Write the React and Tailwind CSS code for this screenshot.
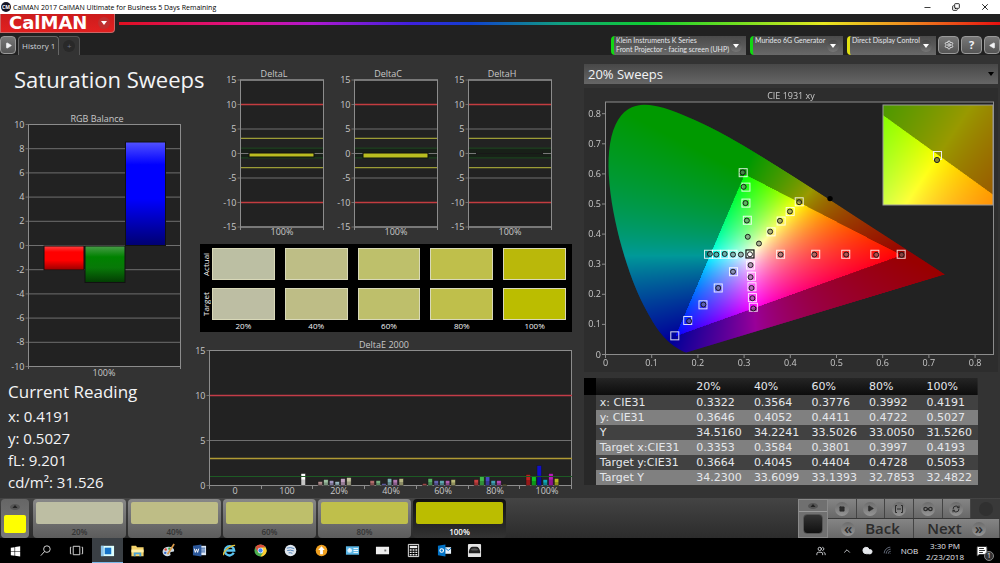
import { useEffect, useRef } from 'react';
import {
  ChevronUp, Cloud, Copy, Infinity as InfinityIcon, MessageSquareText, Minus,
  Play, RefreshCw, Settings, Square, Users, Wifi, X,
} from 'lucide-react';

const LOCUS = [
  [0.1741, 0.005], [0.1714, 0.0051], [0.1644, 0.0109], [0.1566, 0.0177], [0.144, 0.0297],
  [0.1241, 0.0578], [0.1096, 0.0868], [0.0913, 0.1327], [0.0687, 0.2007], [0.0454, 0.295],
  [0.0235, 0.4127], [0.0082, 0.5384], [0.0039, 0.6548], [0.0139, 0.7502], [0.0389, 0.812],
  [0.0743, 0.8338], [0.1142, 0.8262], [0.1547, 0.8059], [0.2296, 0.7543], [0.3016, 0.6923],
  [0.3731, 0.6245], [0.4441, 0.5547], [0.5125, 0.4866], [0.5752, 0.4242], [0.627, 0.3725],
  [0.6658, 0.334], [0.6915, 0.3083], [0.719, 0.2809], [0.7347, 0.2653],
];

const TARGETS = [
  [0.64, 0.333], [0.583, 0.333], [0.52, 0.333], [0.455, 0.333], [0.379, 0.333],
  [0.298, 0.604], [0.304, 0.556], [0.304, 0.503], [0.307, 0.446],
  [0.15, 0.062], [0.178, 0.113], [0.211, 0.165], [0.244, 0.221], [0.277, 0.275],
  [0.223, 0.333], [0.24, 0.333], [0.258, 0.333], [0.276, 0.333],
  [0.32, 0.157], [0.318, 0.189], [0.317, 0.225], [0.316, 0.26], [0.314, 0.297],
  [0.4193, 0.5073], [0.3997, 0.4748], [0.3801, 0.4434], [0.3584, 0.4075],
];

const READINGS = [
  [0.641, 0.331], [0.586, 0.331], [0.521, 0.332], [0.452, 0.332], [0.379, 0.332],
  [0.297, 0.605], [0.299, 0.557], [0.303, 0.503], [0.306, 0.445], [0.308, 0.391],
  [0.181, 0.111], [0.212, 0.166], [0.244, 0.221], [0.276, 0.275],
  [0.226, 0.334], [0.24, 0.332], [0.258, 0.334], [0.276, 0.332], [0.293, 0.332],
  [0.32, 0.153], [0.318, 0.187], [0.316, 0.221], [0.314, 0.257], [0.314, 0.297],
  [0.4191, 0.506], [0.3992, 0.4752], [0.3776, 0.4441], [0.3564, 0.4082], [0.3322, 0.3686],
];

const SWATCHES = [
  { label: '20%', actual: 'bg-[#bcbfa3]', target: 'bg-[#bdbea3]' },
  { label: '40%', actual: 'bg-[#bebe86]', target: 'bg-[#bebd86]' },
  { label: '60%', actual: 'bg-[#bec06b]', target: 'bg-[#bebf6b]' },
  { label: '80%', actual: 'bg-[#bfbf4b]', target: 'bg-[#bfbf4b]' },
  { label: '100%', actual: 'bg-[#bab80a]', target: 'bg-[#bbbd00]' },
];

const DELTA_E = [
  [333, 12, '#ffffff'],
  [384, 4, '#b48f8f'], [401, 6, '#9dbfa0'], [418, 5, '#a096c0'], [435, 4, '#9cbcc4'], [452, 7, '#c0a0c0'], [470, 8, '#c2c2a0'],
  [540, 5, '#b06c6c'], [558, 5, '#78b080'], [575, 2, '#6868b0'], [592, 7, '#80b0b4'], [609, 6, '#b078b0'], [627, 7, '#b4b482'],
  [697, 2, '#b05050'], [714, 7, '#5cb068'], [732, 5, '#6464b0'], [749, 5, '#60a8b0'], [766, 5, '#b060b0'], [783, 6, '#b8b878'],
  [852, 6, '#c84040'], [869, 9, '#40b848'], [886, 9, '#4848c0'], [903, 5, '#40a0b4'], [920, 5, '#b448b4'], [937, 1, '#a0a040'],
  [1008, 11, '#c02020'], [1025, 9, '#10c020'], [1041, 20, '#1010c8'], [1059, 6, '#10a8b8'], [1076, 12, '#b818b8'], [1093, 7, '#b8b820'],
];

const ROWS = [
  ['x: CIE31', '0.3322', '0.3564', '0.3776', '0.3992', '0.4191'],
  ['y: CIE31', '0.3646', '0.4052', '0.4411', '0.4722', '0.5027'],
  ['Y', '34.5160', '34.2241', '33.5026', '33.0050', '31.5260'],
  ['Target x:CIE31', '0.3353', '0.3584', '0.3801', '0.3997', '0.4193'],
  ['Target y:CIE31', '0.3664', '0.4045', '0.4404', '0.4728', '0.5053'],
  ['Target Y', '34.2300', '33.6099', '33.1393', '32.7853', '32.4822'],
];

// xy chromaticity -> display colour, dimmed outside the Rec.709 triangle
function xyToRgb(x, y) {
  const yy = Math.max(y, 0.0001);
  const X = x / yy;
  const Z = (1 - x - yy) / yy;
  const lin = [
    3.2406 * X - 1.5372 - 0.4986 * Z,
    -0.9689 * X + 1.8758 + 0.0415 * Z,
    0.0557 * X - 0.204 + 1.057 * Z,
  ];
  const inside = Math.min(...lin) >= 0;
  const max = Math.max(...lin);
  return lin.map((c) => Math.round(255 * (inside ? 1 : 0.6) * Math.pow(Math.max(c, 0) / max, 0.85)));
}

function Chromaticity({ x0, x1, y0, y1, width, height, clip }) {
  const ref = useRef(null);

  useEffect(() => {
    const ctx = ref.current.getContext('2d');
    const img = ctx.createImageData(width, height);
    for (let j = 0; j < height; j++) {
      for (let i = 0; i < width; i++) {
        const rgb = xyToRgb(x0 + ((x1 - x0) * i) / width, y1 - ((y1 - y0) * j) / height);
        img.data.set([...rgb, 255], (j * width + i) * 4);
      }
    }
    ctx.putImageData(img, 0, 0);
    if (!clip) return;

    const pts = LOCUS.map(([x, y]) => [((x - x0) / (x1 - x0)) * width, ((y1 - y) / (y1 - y0)) * height]);
    ctx.globalCompositeOperation = 'destination-in';
    ctx.beginPath();
    ctx.moveTo(...pts[0]);
    for (let k = 1; k < pts.length - 1; k++) {
      const [ax, ay] = pts[k];
      const [bx, by] = pts[k + 1];
      ctx.quadraticCurveTo(ax, ay, (ax + bx) / 2, (ay + by) / 2);
    }
    ctx.lineTo(...pts[pts.length - 1]);
    ctx.closePath();
    ctx.fill();
    ctx.globalCompositeOperation = 'source-over';
  }, [x0, x1, y0, y1, width, height, clip]);

  return <canvas ref={ref} width={width} height={height} className="block w-full h-full" />;
}

function Frame({ x, y, w, h, ticks, title, titleX }) {
  return (
    <>
      <rect x={x} y={y} width={w} height={h} fill="#222" stroke="#8c8c8c" />
      {ticks.map(([label, ty]) => (
        <g key={label}>
          <line x1={x - 3} x2={x + w} y1={ty} y2={ty} stroke="#6f6f6f" />
          <text x={x - 4} y={ty + 3} textAnchor="end" fill="#c8c8c8" fontSize="9">{label}</text>
        </g>
      ))}
      <rect x={x} y={y} width={w} height={h} fill="none" stroke="#8c8c8c" />
      <text x={titleX} y={y - 3} textAnchor="middle" fill="#c8c8c8" fontSize="9">{title}</text>
    </>
  );
}

function RgbBalance() {
  const ticks = [10, 8, 6, 4, 2, 0, -2, -4, -6, -8, -10].map((v) => [String(v), 134.5 - v * 12.1]);
  return (
    <svg viewBox="0 0 190 268" className="block w-full mt-4">
      <defs>
        <linearGradient id="barR" x2="0" y2="1">
          <stop offset="0" stopColor="#f44" /><stop offset=".25" stopColor="#f00" />
          <stop offset=".6" stopColor="#f00" /><stop offset="1" stopColor="#900" />
        </linearGradient>
        <linearGradient id="barG" x2="0" y2="1">
          <stop offset="0" stopColor="#4a9c4a" /><stop offset=".3" stopColor="#008200" />
          <stop offset=".6" stopColor="#087808" /><stop offset="1" stopColor="#033c03" />
        </linearGradient>
        <linearGradient id="barB" x2="0" y2="1">
          <stop offset="0" stopColor="#5252ff" /><stop offset=".22" stopColor="#00f" />
          <stop offset=".55" stopColor="#00f" /><stop offset="1" stopColor="#000070" />
        </linearGradient>
      </defs>
      <Frame x={28.5} y={13.5} w={152} h={242} ticks={ticks} title="RGB Balance" titleX={97} />
      <g stroke="#111">
        <rect x="44" y="135" width="40" height="24" fill="url(#barR)" />
        <rect x="85" y="135" width="40" height="36.5" fill="url(#barG)" />
        <rect x="125.5" y="31" width="40" height="103.5" fill="url(#barB)" />
      </g>
      <path d="M28.5 255v3M180.5 255v3" stroke="#8c8c8c" />
      <text x="104" y="265" textAnchor="middle" fill="#c8c8c8" fontSize="9">100%</text>
    </svg>
  );
}

function DeltaChart({ title, value }) {
  const py = (v) => 86.5 - v * 4.9;
  const ticks = [15, 10, 5, 0, -5, -10, -15].map((v) => [String(v), py(v)]);
  return (
    <svg viewBox="0 0 114 171" className="block w-full">
      <Frame x={22.5} y={13} w={83} h={147} ticks={ticks} title={title} titleX={56} />
      <rect x="23" y={py(1)} width="82" height="9.8" fill="#182018" />
      <path d={`M23 ${py(0)}h82`} stroke="#777" />
      <path d={`M23 ${py(10)}h82M23 ${py(-10)}h82`} stroke="#c43c40" strokeWidth="1.3" />
      <path d={`M23 ${py(3.1)}h82M23 ${py(-2.9)}h82`} stroke="#bcbc3c" />
      <path d={`M23 ${py(1.1)}h82M23 ${py(-0.9)}h82`} stroke="#1d4a20" />
      {value ? (
        <rect x="31" y="86" width="65" height={value} fill="#b9bd20" stroke="#111" />
      ) : (
        <path d="M30.5 84v4M96.5 84v4M31 86.5h65" stroke="#181818" />
      )}
      <path d="M22.5 159v4M105.5 159v4" stroke="#8c8c8c" />
      <text x="64" y="168" textAnchor="middle" fill="#c8c8c8" fontSize="9">100%</text>
    </svg>
  );
}

function DeltaEChart() {
  const ticks = [[15, 14.5], [10, 59.5], [5, 104.5], [0, 149.5]].map(([l, y]) => [String(l), y]);
  return (
    <svg viewBox="0 0 390 160" className="block w-full mt-1">
      <Frame x={19.5} y={14.5} w={362} h={135} ticks={ticks} title="DeltaE 2000" titleX={194} />
      {DELTA_E.map(([x, h, fill]) => (
        <g key={x}>
          <rect x={x / 3} y={149.5 - h} width="4.5" height={h} fill={fill} stroke="#181818" strokeWidth=".5" />
          <rect x={x / 3} y={149.5 - h / 2} width="4.5" height={h / 2} fill="#000" opacity=".22" />
        </g>
      ))}
      <path d="M20 59.5h362" stroke="#c43c48" strokeWidth="1.5" />
      <path d="M20 122.5h362" stroke="#b09a34" strokeWidth="1.5" />
      <path d="M20 140.5h362" stroke="#1d5a24" />
      <path d="M19.5 149v4M71.5 149v4M122.5 149v4M174.5 149v4M226.5 149v4M278.5 149v4M329.5 149v4M381.5 149v4" stroke="#8c8c8c" />
      {['0', '100', '20%', '40%', '60%', '80%', '100%'].map((t, i) => (
        <text key={t} x={45 + i * 52} y="158" textAnchor="middle" fill="#c8c8c8" fontSize="9">{t}</text>
      ))}
    </svg>
  );
}

function CieChart() {
  const px = (x) => 21.5 + x * 462;
  const py = (y) => 266.5 - y * 301;
  return (
    <svg viewBox="0 0 414 284" className="block w-full mt-1 bg-[#2d2d2d]">
      <rect x="21.5" y="14" width="388" height="252.5" fill="#222" />
      <foreignObject x="21.5" y="13.65" width="369.6" height="252.85">
        <Chromaticity x0={0} x1={0.8} y0={0} y1={0.84} width={740} height={506} clip />
      </foreignObject>
      <rect x="21.5" y="14" width="388" height="252.5" fill="none" stroke="#8c8c8c" />
      <text x="207" y="11" textAnchor="middle" fill="#c8c8c8" fontSize="9">CIE 1931 xy</text>
      {[0, 0.1, 0.2, 0.3, 0.4, 0.5, 0.6, 0.7, 0.8].map((v) => (
        <g key={v} fill="#c8c8c8" fontSize="9">
          <path d={`M18 ${py(v)}h3M${px(v)} 267v3`} stroke="#8c8c8c" />
          <text x="17" y={py(v) + 3} textAnchor="end">{v}</text>
          <text x={px(v)} y="278" textAnchor="middle">{v}</text>
        </g>
      ))}
      {TARGETS.map(([x, y]) => (
        <rect key={`${x} ${y}`} x={px(x) - 4} y={py(y) - 4} width="8" height="8" fill="none" stroke="#fff" strokeOpacity=".85" />
      ))}
      {READINGS.map(([x, y]) => (
        <circle key={`${x} ${y}`} cx={px(x)} cy={py(y)} r="2.5" fill="#777" fillOpacity=".55" stroke="#111" strokeWidth=".9" />
      ))}
      <rect x={px(0.3127) - 4} y={py(0.334) - 4} width="8" height="8" fill="none" stroke="#111" strokeWidth="1.2" />
      <circle cx={px(0.3127)} cy={py(0.333)} r="2.5" fill="#fff" stroke="#222" />
      <circle cx={px(0.486)} cy={py(0.518)} r="2.7" fill="#000" />
      <foreignObject x="299" y="17" width="110" height="100">
        <Chromaticity x0={0.369} x1={0.469} y0={0.4553} y1={0.5553} width={220} height={200} />
      </foreignObject>
      <rect x="299" y="17" width="110" height="100" fill="none" stroke="#999" />
      <rect x="349.5" y="63.5" width="8" height="8" fill="none" stroke="#eee" />
      <circle cx="353" cy="72" r="2.6" fill="#8a8a30" stroke="#222" />
    </svg>
  );
}

function Swatches() {
  return (
    <div className="mt-1.5 ml-2.5 mr-2 h-22 bg-black flex text-[8px] leading-3 text-gray-100">
      <div className="w-3 flex flex-col pt-1 gap-2">
        <span className="h-8 text-center rotate-180 [writing-mode:vertical-rl]">Actual</span>
        <span className="h-8 text-center rotate-180 [writing-mode:vertical-rl]">Target</span>
      </div>
      <div className="flex-1 grid grid-cols-5 gap-2.5 pt-1 pr-1.5">
        {SWATCHES.map((s) => (
          <div key={s.label} className="text-center">
            <div className={`h-8 border border-[#d8d8b8] ${s.actual}`} />
            <div className={`h-8 mt-2 border border-[#d8d8b8] ${s.target}`} />
            {s.label}
          </div>
        ))}
      </div>
    </div>
  );
}

function Knob({ children }) {
  return (
    <span className="w-3 h-3 shrink-0 rounded-full bg-gradient-to-b from-[#444] to-[#777] flex items-center justify-center text-white">
      {children}
    </span>
  );
}

function Caret() {
  return (
    <svg viewBox="0 0 6 4" className="w-1.5 h-1"><path d="M0 0h6L3 4z" fill="currentColor" /></svg>
  );
}

function Device({ name, sub, edge, width }) {
  return (
    <button className={`${width} h-[19px] pl-0.5 pr-1 border-l-3 ${edge} rounded-l-sm bg-gradient-to-b from-[#4a4a4a] to-[#696969] flex items-center text-left font-['Lato',sans-serif] text-[7px] leading-[9px] text-gray-200`}>
      <span className="flex-1 min-w-0 self-start whitespace-nowrap">{name}<br />{sub}</span>
      <Knob><Caret /></Knob>
    </button>
  );
}

function Header() {
  const round = 'h-[18px] rounded-sm border border-[#999] bg-gradient-to-b from-[#777] to-[#555] flex items-center justify-center text-gray-100';
  return (
    <header className="bg-[#212121]">
      <div className="h-3.5 bg-white flex items-center pl-px text-black">
        <span className="w-2.5 h-2.5 rounded-full bg-[#151525] text-[5px] leading-none font-bold text-white flex items-center justify-center">CM</span>
        <span className="pl-0.5 text-[7px] leading-none">CalMAN 2017 CalMAN Ultimate for Business 5 Days Remaining</span>
        <div className="ml-auto flex gap-5 pr-2.5">
          <button aria-label="Minimize"><Minus size={9} strokeWidth={2} /></button>
          <button aria-label="Restore"><Copy size={8} strokeWidth={2.5} className="-scale-x-100 rotate-180" /></button>
          <button aria-label="Close"><X size={10} strokeWidth={2} /></button>
        </div>
      </div>
      <div className="flex items-start">
        <button className="w-[115px] h-[19px] pl-2 pr-1 flex items-center justify-between border border-t-0 border-[#c66] rounded-br-sm bg-gradient-to-b from-[#cc1c1c] to-[#e22020] text-white">
          <span className="font-['DejaVu_Sans',sans-serif] font-bold text-[18px] leading-none">CalMAN</span>
          <span className="w-3 h-3 rounded-full bg-[#c03030] flex items-center justify-center"><Caret /></span>
        </button>
        <div className="flex-1 h-[3px] mt-2 ml-1 bg-[linear-gradient(90deg,#e01020_0%,#e0108c_14%,#b018d0_22%,#4020e0_33%,#1040d0_40%,#10a080_50%,#10d030_60%,#70e020_70%,#e8e820_80%,#f09020_89%,#e81010_100%)]" />
      </div>
      <div className="flex items-end h-[22px]">
        <button aria-label="Play" className={`w-4 mb-px mr-0.5 ${round}`}><Play size={7} fill="currentColor" /></button>
        <button className="h-[19px] px-[3px] border border-b-0 border-[#666] rounded-t-sm bg-[#333] text-[8px] text-gray-300">History 1</button>
        <button aria-label="Add" className="h-[19px] w-[21px] border border-b-0 border-l-0 border-[#555] rounded-tr-sm bg-[#333] text-[8px] text-gray-500 flex items-center justify-center">
          <span className="w-3 h-3 rounded-full bg-[#292929] flex items-center justify-center">+</span>
        </button>
        <div className="ml-auto flex gap-1">
          <Device name="Klein Instruments K Series" sub="Front Projector - facing screen (UHP)" edge="border-[#12d812]" width="w-[135px]" />
          <Device name="Murideo 6G Generator" edge="border-[#12d812]" width="w-[93px]" />
          <Device name="Direct Display Control" edge="border-[#e2e212]" width="w-[89px]" />
        </div>
        <div className="flex gap-0.5 pl-0.5 mb-px">
          <button aria-label="Settings" className={`w-[21px] ${round}`}><Settings size={10} /></button>
          <button aria-label="Help" className={`w-[21px] text-[11px] font-bold ${round}`}>?</button>
          <button aria-label="Collapse" className={`w-4 ${round}`}><Play size={7} fill="currentColor" className="rotate-180" /></button>
        </div>
      </div>
    </header>
  );
}

function DataTable() {
  return (
    <div className="mt-1.5 pr-5">
      <table className="w-full table-fixed border-collapse text-left font-['DejaVu_Sans',sans-serif] text-[11px] leading-[15px] text-gray-200">
        <thead>
          <tr className="h-[17px] bg-gradient-to-b from-[#252525] to-[#0c0c0c]">
            <th className="w-[3%] p-0 bg-black" />
            <th className="w-[24%] p-0" />
            {SWATCHES.map((s) => <th key={s.label} className="p-0 pl-1.5 font-normal">{s.label}</th>)}
          </tr>
        </thead>
        <tbody>
          {ROWS.map(([name, ...cells], i) => (
            <tr key={name} className={i % 2 ? 'bg-[#808080]' : 'bg-[#414141]'}>
              <td className="p-0 bg-[#282828]" />
              <th scope="row" className="p-0 pl-1 font-normal whitespace-nowrap">{name}</th>
              {cells.map((c) => <td key={c} className="p-0 pl-1.5">{c}</td>)}
            </tr>
          ))}
        </tbody>
      </table>
    </div>
  );
}

function Transport() {
  const btn = 'h-full border-r border-[#444] bg-gradient-to-b from-[#858585] to-[#686868] flex items-center justify-center';
  const disc = 'w-3.5 h-3.5 rounded-full bg-gradient-to-b from-[#6c6c6c] to-[#959595] flex items-center justify-center';
  return (
    <div className="ml-auto flex text-[#2b2b2b]">
      <div className="w-[30px] flex flex-col border border-[#8a8a8a] bg-[#707070]">
        <button aria-label="Expand" className="h-3 border-b border-[#9a9a9a] flex items-center justify-center"><Eject /></button>
        <button aria-label="Pattern" className="mt-0.5 mx-auto w-5 h-5 rounded-sm border border-[#555] bg-gradient-to-b from-[#333] to-[#111]" />
      </div>
      <div className="w-[172px] flex flex-col">
        <div className="h-[19px] grid grid-cols-6">
          <button aria-label="Stop" className={btn}><span className={disc}><Square size={6} fill="currentColor" /></span></button>
          <button aria-label="Read" className={btn}><span className={disc}><Play size={7} fill="currentColor" /></span></button>
          <button aria-label="Read series" className={btn}>
            <span className={disc}>
              <svg viewBox="0 0 8 8" className="w-2 h-2" fill="none" stroke="currentColor"><path d="M2 .5H.5v7H2M6 .5h1.5v7H6M2 4h4" /></svg>
            </span>
          </button>
          <button aria-label="Continuous" className={btn}><span className={disc}><InfinityIcon size={10} strokeWidth={3} /></span></button>
          <button aria-label="Refresh" className={btn}><span className={disc}><RefreshCw size={8} strokeWidth={3} /></span></button>
          <div className="flex items-center justify-center bg-[#393939]"><span className="w-3.5 h-3.5 rounded-full bg-[#303030]" /></div>
        </div>
        <div className="h-[19px] mt-px grid grid-cols-2 text-[15px] leading-none font-semibold">
          <button className={`gap-2.5 ${btn}`}><span className={disc}>«</span>Back</button>
          <button className={`gap-2.5 ${btn}`}>Next<span className={disc}>»</span></button>
        </div>
      </div>
    </div>
  );
}

function Eject() {
  return (
    <svg viewBox="0 0 10 6" className="w-2.5 h-1.5"><ellipse cx="5" cy="3" rx="5" ry="3" fill="#555" /><path d="M2.5 4L5 1l2.5 3z" fill="#222" /></svg>
  );
}

function PatternBar() {
  return (
    <section className="h-10 pt-px flex bg-gradient-to-b from-[#444] to-[#2c2c2c]">
      <div className="w-7 ml-px mr-1 flex flex-col items-center rounded-sm bg-gradient-to-b from-[#666] to-[#7a7a7a]">
        <button aria-label="Expand" className="h-4"><Eject /></button>
        <button aria-label="Yellow" className="w-[22px] h-[18px] rounded-xs bg-[#ff0]" />
      </div>
      <div className="w-[473px] grid grid-cols-5 gap-0.5">
        {SWATCHES.map((s, i) => (
          <button
            key={s.label}
            className={`px-[3px] pt-[3px] rounded-sm text-[8px] leading-3 font-semibold ${
              i === 4 ? 'bg-gradient-to-b from-[#111] to-[#333] text-white' : 'bg-gradient-to-b from-[#888] to-[#5c5c5c] text-[#333]'
            }`}
          >
            <span className={`block h-[22px] mb-0.5 rounded-xs ${s.target}`} />
            {s.label}
          </button>
        ))}
      </div>
      <Transport />
    </section>
  );
}

const APPS = [
  ['Start', <path key="a" fill="#fff" d="M3 5l4-.6v4.4H3zM7.6 4.3L13 3.5v5.3H7.6zM3 9.3h4v4.3L3 13zM7.6 9.3H13v5.2l-5.4-.8z" />],
  ['Search', <g key="a" fill="none" stroke="#ddd"><circle cx="9.5" cy="6.5" r="3.5" /><path d="M7 9l-4 4.5" /></g>],
  ['Task view', <path key="a" fill="none" stroke="#ddd" d="M4.5 3.5h7v9h-7zM2.5 4.5h-1v7h1M13.5 4.5h1v7h-1" />],
  ['CalMAN', <g key="a"><path fill="#dff" d="M1 3h14v11H1z" /><path fill="#1673c8" d="M5 5h7v7H5z" /><path fill="#8cc4ea" d="M1 3h3v11H1z" /></g>],
  ['Explorer', <g key="a"><path fill="#f3d26c" d="M1.5 3h5l1 1.5h7v9.5h-13z" /><path fill="#fff0a8" d="M1.5 7h13v3h-13z" /><path fill="#4aa3d8" d="M4 10h8v4h-2v-2H6v2H4z" /></g>],
  ['Paint', <g key="a"><path fill="#c9d8e4" d="M8 4C3 4 1 8 2 11s5 4 8 2c1-1-1-2 0-3s4 0 4-2-2-4-6-4z" /><circle cx="5" cy="7" r="1.3" fill="#d43" /><circle cx="9" cy="6" r="1.3" fill="#3a4" /><circle cx="4.5" cy="10.5" r="1.3" fill="#36c" /><path d="M14 1L7 12" stroke="#d99a4a" strokeWidth="1.8" /></g>],
  ['Word', <g key="a"><path fill="#dbe6f5" d="M8 3h7v10H8z" /><path stroke="#2b579a" d="M9 5.5h5M9 7.5h5M9 9.5h5" /><path fill="#2b579a" d="M1 3l9-1.5v13L1 13z" /><path d="M2.5 6l1 4 1.3-3.5L6 10l1.2-4" fill="none" stroke="#fff" /></g>],
  ['Internet Explorer', <g key="a" fill="none"><path d="M12.5 10.5A5 5 0 1 1 13 8H4" stroke="#5cc4f0" strokeWidth="2.5" /><path d="M2 13C0 10 9 2 14 2.5" stroke="#e8c030" strokeWidth="1.3" /></g>],
  ['Chrome', <g key="a"><circle cx="8" cy="8" r="6.5" fill="#4caf50" /><path fill="#e04a3a" d="M2.4 4.7a6.5 6.5 0 0 1 11.2 0L8 5z" /><path fill="#fc3" d="M13.6 4.7A6.5 6.5 0 0 1 8 14.5l3-5-3-4.8z" /><path fill="#e04a3a" d="M2.4 4.7L5 9.3 8 5z" /><circle cx="8" cy="8" r="3" fill="#fff" /><circle cx="8" cy="8" r="2.3" fill="#4285f4" /></g>],
  ['Messenger', <g key="a"><circle cx="8" cy="8" r="6.2" fill="#dfe6ee" /><path d="M4 5.5q4-1.5 8 .5M4.5 8q3.5-1 7 .5M6 10.5q2-.5 4 .5" fill="none" stroke="#4c7fb8" /></g>],
  ['Updater', <g key="a"><circle cx="8" cy="8" r="6.2" fill="#f0a020" /><path fill="#fff" d="M8 3.5l3.5 4h-2V12h-3V7.5h-2z" /></g>],
  ['Control panel', <g key="a"><path fill="#58b4e4" d="M1 3.5h14v9H1z" /><circle cx="5" cy="8" r="2.5" fill="#d8f0ff" /><path d="M5 8V5.5M9 6h5M9 8h5M9 10h5" stroke="#fff" /></g>],
  ['Display', <g key="a"><path fill="#eee" d="M1 4h14v8H1z" /><path fill="#777" d="M10 7h2v2h-2z" /></g>],
  ['Calculator', <g key="a"><path fill="none" stroke="#eee" d="M2.5 1.5h11v13h-11z" /><path fill="#eee" d="M4 3h8v2.5H4z" /><path d="M4 7.5h8M4 10h8M4 12.5h8" stroke="#eee" strokeWidth="1.5" strokeDasharray="2 1" /></g>],
  ['Outlook', <g key="a"><path fill="#e8f2fb" d="M8 4.5h7v7H8z" /><path d="M9 5.5l3 2.5 3-2.5" fill="none" stroke="#0072c6" /><path fill="#0072c6" d="M1 3l8-1.5v13L1 13z" /><circle cx="5" cy="8" r="1.9" fill="none" stroke="#fff" strokeWidth="1.2" /></g>],
  ['Meter', <g key="a"><rect x="1" y="1" width="14" height="14" rx="1" fill="#e4e4e4" /><path fill="#222" d="M2 9q1-5 4-5h4q3 0 4 5v2H2z" /><path fill="#555" d="M4 7q4-3 8 0l-1 1H5z" /></g>],
];

function Taskbar() {
  return (
    <footer className="h-[25px] bg-black flex items-center text-gray-200">
      <nav className="w-[49%] h-full grid grid-cols-16">
        {APPS.map(([name, icon]) => (
          <button
            key={name}
            aria-label={name}
            className={`flex items-center justify-center ${name === 'CalMAN' ? 'bg-[#3a3f44] border-b border-[#7ab8e8]' : ''}`}
          >
            <svg viewBox="0 0 16 16" className="w-[15px] h-[15px]">{icon}</svg>
          </button>
        ))}
      </nav>
      <div className="ml-auto flex items-center pr-3 text-[8px] leading-[11px]">
        <Users size={10} className="mr-4" />
        <ChevronUp size={10} className="mr-2.5" />
        <Cloud size={11} fill="currentColor" className="mr-2.5" />
        <Wifi size={10} className="mr-2 -rotate-45 text-gray-500" />
        <span className="mr-2">NOB</span>
        <time className="mr-3 text-center">3:30 PM<br />2/23/2018</time>
        <button aria-label="Notifications" className="relative">
          <MessageSquareText size={12} fill="#fff" stroke="#333" />
          <span className="absolute -right-1.5 -bottom-1 w-2.5 h-2.5 rounded-full bg-[#333] border border-[#888] text-[7px] leading-[8px] text-center">1</span>
        </button>
      </div>
    </footer>
  );
}

export default function App() {
  return (
    <div className="min-h-screen flex flex-col overflow-hidden bg-[#333] font-['Open_Sans','Noto_Sans',sans-serif]">
      <Header />
      <main className="flex-1 grid grid-cols-[19fr_39fr_42fr] bg-[#333] text-gray-100">
        <section className="min-w-0 pt-2">
          <h1 className="pl-3.5 text-[22px] leading-8 whitespace-nowrap">Saturation Sweeps</h1>
          <RgbBalance />
          <div className="pl-2 text-[15px] leading-[22px]">
            <h2 className="text-[17px] leading-[26px]">Current Reading</h2>
            <p>x: 0.4191</p>
            <p>y: 0.5027</p>
            <p>fL: 9.201</p>
            <p>cd/m²: 31.526</p>
          </div>
        </section>

        <section className="min-w-0 pt-3">
          <div className="pl-7 pr-5 grid grid-cols-3">
            <DeltaChart title="DeltaL" value={4} />
            <DeltaChart title="DeltaC" value={5} />
            <DeltaChart title="DeltaH" value={0} />
          </div>
          <Swatches />
          <DeltaEChart />
        </section>

        <section className="min-w-0 pt-[9px] pl-1 pr-0.5">
          <div className="relative">
            <select aria-label="Sweep" className="block w-full h-5 pl-1 appearance-none bg-gradient-to-b from-[#484848] to-[#666] text-[13px] leading-5 text-gray-100">
              <option>20% Sweeps</option>
              <option>40% Sweeps</option>
            </select>
            <span className="absolute right-1 top-2 text-black pointer-events-none"><Caret /></span>
          </div>
          <CieChart />
          <DataTable />
        </section>
      </main>
      <PatternBar />
      <Taskbar />
    </div>
  );
}
